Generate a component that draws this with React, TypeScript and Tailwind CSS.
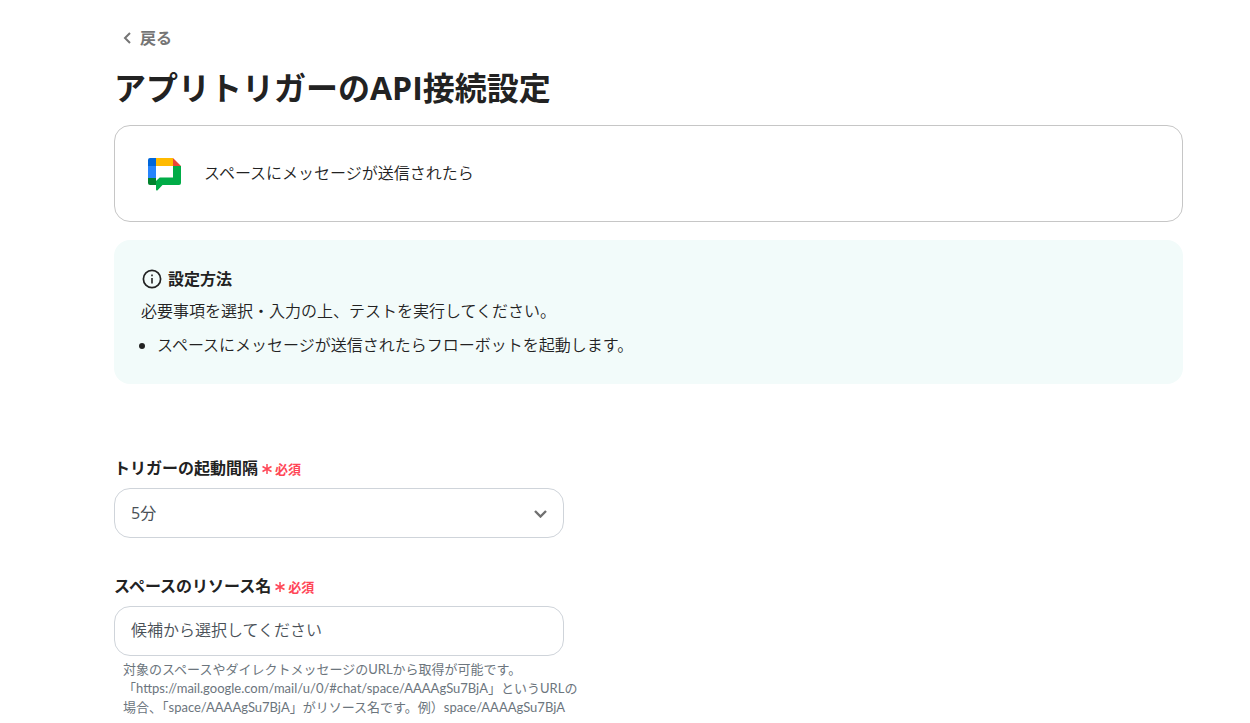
import type { ReactNode } from 'react';

const intervals = ['5分', '10分', '15分', '30分', '60分'];

function ChatLogo() {
  return (
    <svg viewBox="0 0 33 34" className="h-[34px] w-[33px] shrink-0" aria-hidden="true">
      <path fill="#0066da" d="M2 1h6v8H0V3a2 2 0 0 1 2-2z" />
      <path fill="#2684fc" d="M0 9h8v12H0z" />
      <path fill="#00832d" d="M0 21h8v7H2a2 2 0 0 1-2-2z" />
      <path fill="#ffba00" d="M8 1h17v8H8z" />
      <path fill="#ea4335" d="M25 1l8 8h-8z" />
      <path
        fill="#00ac47"
        d="M25 9h8v17a2 2 0 0 1-2 2H14.500l-4.900 5.200c-.6.6-1.600.2-1.600-.7V24l3.700-3.500H25z"
      />
    </svg>
  );
}

function InfoIcon() {
  return (
    <svg viewBox="0 0 20 20" className="h-5 w-5" fill="none" stroke="#222" aria-hidden="true">
      <circle cx="10" cy="10" r="8.600" strokeWidth="1.700" />
      <path d="M10 9v5.500" strokeWidth="1.600" />
      <path d="M10 5.400v1.800" strokeWidth="1.600" />
    </svg>
  );
}

function FieldLabel({ htmlFor, children }: { htmlFor: string; children: ReactNode }) {
  return (
    <label htmlFor={htmlFor} className="flex items-center gap-1 text-base leading-6 font-bold">
      {children}
      <span className="flex items-center gap-[3px] pt-px text-[13px] leading-5 font-bold text-[#ff4757]">
        <svg viewBox="0 0 10 10" className="mt-px h-[10px] w-[10px]" stroke="currentColor" strokeWidth="1.500" aria-hidden="true">
          <path d="M5 0v10M.5 2.500l9 5M.5 7.500l9-5" />
        </svg>
        必須
      </span>
    </label>
  );
}

export default function App() {
  return (
    <main className="min-h-screen bg-white pt-6 pr-[67px] pl-[114px] font-['Open_Sans','Noto_Sans_CJK_JP',sans-serif] text-[#222]">
      <a href="#" className="ml-2 inline-flex items-center gap-2 text-base leading-7 font-bold text-[#757575]">
        <svg viewBox="0 0 10 14" className="h-[14px] w-[10px]" fill="none" stroke="currentColor" strokeWidth="2" aria-hidden="true">
          <path d="M8 2L3 7l5 5" />
        </svg>
        戻る
      </a>

      <h1 className="mt-3 text-[32px] leading-[48px] font-bold">アプリトリガーのAPI接続設定</h1>

      {/* Selected trigger */}
      <section className="mt-[13px] flex min-h-[97px] items-center gap-[23px] rounded-2xl border border-[#c6c6c6] px-[33px]">
        <ChatLogo />
        <p className="pb-0.5 text-base font-[350]">スペースにメッセージが送信されたら</p>
      </section>

      {/* How to set up */}
      <section className="mt-[18px] rounded-2xl bg-[#f2fbfa] px-[27px] py-[27px] text-base leading-6 font-[350]">
        <h2 className="flex items-center gap-[6px] pl-px font-bold">
          <InfoIcon />
          設定方法
        </h2>
        <p className="mt-2">必要事項を選択・入力の上、テストを実行してください。</p>
        <ul className="mt-[10px] list-disc pl-4">
          <li>スペースにメッセージが送信されたらフローボットを起動します。</li>
        </ul>
      </section>

      <form className="mt-[72px] max-w-[450px]">
        <FieldLabel htmlFor="interval">トリガーの起動間隔</FieldLabel>
        <div className="mt-2 grid items-center">
          <select
            id="interval"
            defaultValue="5分"
            className="col-start-1 row-start-1 h-[50px] w-full appearance-none rounded-2xl border border-[#cfd4da] bg-white px-4 text-base text-[#495057]"
          >
            {intervals.map((interval) => (
              <option key={interval}>{interval}</option>
            ))}
          </select>
          <svg
            viewBox="0 0 14 10"
            className="pointer-events-none col-start-1 row-start-1 mr-4 h-[10px] w-[14px] justify-self-end"
            fill="none"
            stroke="#707070"
            strokeWidth="2.400"
            aria-hidden="true"
          >
            <path d="M1 3L6.500 8.500 12 3" />
          </svg>
        </div>

        <div className="mt-9">
          <FieldLabel htmlFor="space">スペースのリソース名</FieldLabel>
          <input
            id="space"
            type="text"
            placeholder="候補から選択してください"
            aria-describedby="space-help"
            className="mt-2 block h-[50px] w-full rounded-2xl border border-[#cfd4da] bg-white px-4 pb-0.5 text-base font-[350] placeholder:text-[#495057]"
          />
          <p
            id="space-help"
            className="mt-1 pl-[9px] font-['Lato','Noto_Sans_CJK_JP',sans-serif] text-[13px] leading-[19px] whitespace-nowrap text-[#6c757d]"
          >
            対象のスペースやダイレクトメッセージのURLから取得が可能です。
            <br />
            「https://mail.google.com/mail/u/0/#chat/space/AAAAgSu7BjA」というURLの
            <br />
            場合、「space/AAAAgSu7BjA」がリソース名です。例）space/AAAAgSu7BjA
          </p>
        </div>
      </form>
    </main>
  );
}
